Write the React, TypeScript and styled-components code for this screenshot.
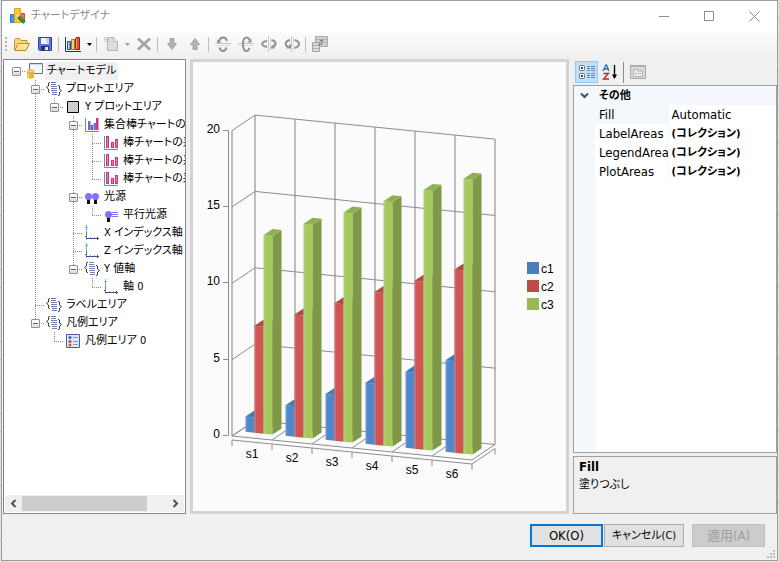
import React from "react";
import styled, { createGlobalStyle, css } from "styled-components";

const uiFont = `"DejaVu Sans Condensed", "Noto Sans", "Noto Sans CJK JP", sans-serif`;

const GlobalStyle = createGlobalStyle`
  *, *::before, *::after { box-sizing: border-box; }
  body {
    margin: 0;
    background: #e4e4e4;
    color: #000;
    font: 11px/18px ${uiFont};
    font-feature-settings: "palt";
  }
  button { font: inherit; font-feature-settings: inherit; color: inherit; }
  svg { display: block; }
`;

/* ---------- window frame ---------- */

const Desktop = styled.div`
  display: flex;
  min-height: 100vh;
  padding: 0 1px 1px;
  background: repeating-linear-gradient(#e4e4e4 0 17px, #c4c4c4 17px 18px);
`;

const Window = styled.main`
  flex: 1;
  min-width: 0;
  display: flex;
  flex-direction: column;
  border: 1px solid #9c9c9c;
  background: #f0f0f0;
`;

const TitleBar = styled.header`
  display: flex;
  align-items: center;
  height: 30px;
  padding-left: 8px;
  background: #fff;
`;

const Title = styled.h1`
  flex: 1;
  margin: 0 0 0 5px;
  font-size: 11px;
  font-weight: 400;
  color: #8c8c8c;
`;

const CaptionButton = styled.button`
  display: grid;
  place-items: center;
  width: 45px;
  height: 30px;
  padding: 0;
  border: 0;
  background: transparent;
`;

/* ---------- toolbar ---------- */

const ToolBar = styled.div`
  display: flex;
  align-items: center;
  height: 26px;
  padding-left: 3px;
  background: linear-gradient(#fcfcfc, #f0f0f0);
`;

const Grip = styled.span`
  width: 2px;
  height: 15px;
  margin-right: 3px;
  background: repeating-linear-gradient(#b4b4b4 0 2px, transparent 2px 4px);
`;

const ToolButton = styled.button<{ $narrow?: boolean }>`
  display: grid;
  place-items: center;
  width: ${(p) => (p.$narrow ? 10 : 23)}px;
  height: 22px;
  padding: 0;
  border: 0;
  background: transparent;
`;

const Separator = styled.span<{ $tall?: boolean }>`
  width: 1px;
  height: ${(p) => (p.$tall ? 21 : 15)}px;
  margin: 0 2px;
  background: ${(p) => (p.$tall ? "#8c8c8c" : "#bdbdbd")};
`;

/* ---------- body ---------- */

const Body = styled.div`
  flex: 1;
  min-height: 0;
  display: flex;
  gap: 4px;
  padding: 2px 0 0 1px;
`;

const TreePanel = styled.section`
  width: 183px;
  flex: none;
  display: flex;
  flex-direction: column;
  border: 1px solid #828790;
  background: #fff;
  overflow: hidden;
`;

const TreeList = styled.ul`
  flex: 1;
  margin: 0;
  padding: 2px 0 0 3px;
  list-style: none;
  overflow: hidden;
`;

const TreeRow = styled.li`
  display: flex;
  height: 18px;
  white-space: nowrap;
`;

const dots = "#8a8a8a";

const Guide = styled.span<{ $line: "none" | "full" | "upper"; $branch?: boolean }>`
  flex: none;
  display: grid;
  place-items: center;
  width: 19px;
  height: 18px;
  background-repeat: no-repeat;
  background-image: ${(p) =>
    p.$line === "none" ? "none" : `repeating-linear-gradient(${dots} 0 1px, transparent 1px 2px)`}
    ${(p) => p.$branch && css`, repeating-linear-gradient(90deg, ${dots} 0 1px, transparent 1px 2px)`};
  background-size: 1px ${(p) => (p.$line === "full" ? 18 : 10)}px, 10px 1px;
  background-position: 9px 0, 9px 9px;
`;

const Toggle = styled.button`
  display: grid;
  place-items: center;
  width: 9px;
  height: 9px;
  margin-top: 1px;
  padding: 0;
  border: 1px solid #919191;
  border-radius: 1px;
  background: linear-gradient(#fff, #dcdcdc);
  &::before {
    content: "";
    width: 5px;
    height: 1px;
    background: #4b63a7;
  }
`;

const NodeIcon = styled.span`
  flex: none;
  width: 17px;
  padding: 1px 0 0 1px;
`;

const NodeLabel = styled.span<{ $selected?: boolean }>`
  min-width: 0;
  height: 18px;
  margin-left: 2px;
  padding: 0 2px;
  overflow: hidden;
  line-height: 17px;
  background: ${(p) => (p.$selected ? "#f0f0f0" : "transparent")};
`;

const ScrollBar = styled.div`
  display: flex;
  height: 17px;
  margin: 0 1px 1px;
  background: #f0f0f0;
`;

const ScrollArrow = styled.button`
  display: grid;
  place-items: center;
  width: 17px;
  padding: 0;
  border: 0;
  background: transparent;
`;

const ScrollTrack = styled.div`
  flex: 1;
`;

const ScrollThumb = styled.div`
  width: 86%;
  height: 15px;
  margin-top: 1px;
  background: #cdcdcd;
`;

const ChartPanel = styled.section`
  flex: 1;
  min-width: 0;
  display: flex;
  border: 3px solid #d3d3d3;
  background: #fbfbfb;
`;

const ChartSvg = styled.svg`
  width: 100%;
  height: 100%;
  font-family: "Liberation Sans", Arial, sans-serif;
  font-size: 12px;
`;

const Side = styled.section`
  width: 204px;
  flex: none;
  display: flex;
  flex-direction: column;
`;

const SideTools = styled.div`
  display: flex;
  align-items: center;
  height: 26px;
  padding-left: 2px;
`;

const SideTool = styled(ToolButton)<{ $active?: boolean }>`
  border: 1px solid ${(p) => (p.$active ? "#90c8f6" : "transparent")};
  background: ${(p) => (p.$active ? "#c2dff5" : "transparent")};
`;

const GridBox = styled.div`
  flex: 1;
  border: 1px solid #a0a0a0;
  background: linear-gradient(90deg, #f4f7fc 21px, #fff 21px);
`;

const PropTable = styled.table`
  width: 100%;
  border-collapse: collapse;
  table-layout: fixed;
  td, th {
    height: 19px;
    padding: 0;
    line-height: 18px;
    text-align: left;
    white-space: nowrap;
    overflow: hidden;
  }
`;

const CategoryRow = styled.tr`
  background: #f4f7fc;
`;

const CategoryButton = styled.button`
  display: grid;
  place-items: center;
  width: 21px;
  height: 18px;
  padding: 0;
  border: 0;
  background: transparent;
`;

const PropName = styled.th<{ $selected?: boolean; $category?: boolean }>`
  &&& { padding-left: 4px; }
  font-size: ${(p) => (p.$category ? 11 : 13)}px;
  font-weight: ${(p) => (p.$category ? 700 : 400)};
  background: ${(p) => (p.$selected ? "#f4f7fc" : "transparent")};
  border-right: 1px solid #f4f7fc;
`;

const PropValue = styled.td<{ $bold?: boolean }>`
  &&& { padding-left: 3px; }
  font-size: ${(p) => (p.$bold ? 11 : 13)}px;
  font-weight: ${(p) => (p.$bold ? 700 : 400)};
`;

const Description = styled.div`
  height: 58px;
  margin-top: 3px;
  padding: 1px 5px;
  border: 1px solid #a0a0a0;
  h2, p { margin: 0; line-height: 18px; }
  h2 { font-size: 13px; }
  p { font-size: 11px; }
`;

const Footer = styled.footer`
  position: relative;
  display: flex;
  justify-content: flex-end;
  height: 46px;
  padding: 10px 12px 0 0;
`;

const DialogButton = styled.button<{ $primary?: boolean; $wide?: boolean; $apart?: boolean }>`
  width: ${(p) => (p.$wide ? 80 : 73)}px;
  height: 23px;
  margin-left: ${(p) => (p.$apart ? 8 : 1)}px;
  padding: 0;
  font-size: ${(p) => (p.$wide ? 11 : 13)}px;
  border: ${(p) => (p.$primary ? "2px solid #0078d7" : "1px solid #adadad")};
  background: #e1e1e1;
  white-space: nowrap;
  &:disabled { color: #9c9c9c; border-color: #bfbfbf; background: #ccc; }
`;

const ResizeGrip = styled.svg`
  position: absolute;
  right: 2px;
  bottom: 2px;
`;

/* ---------- icons ---------- */

const Pic = ({ children, size = 16 }: { children: React.ReactNode; size?: number }) => (
  <svg width={size} height={size} viewBox={`0 0 ${size} ${size}`} aria-hidden="true">
    {children}
  </svg>
);

const AppIcon = () => (
  <Pic>
    <path d="M.5 6.500h5v8h-5z" fill="#3f9be0" stroke="#3a78b4" />
    <path d="M10.500 5.500h4v8h-4z" fill="#ec7350" stroke="#c9532f" />
    <path d="M4.500.5h6v14h-6z" fill="#fbc440" stroke="#e2a021" />
    <path d="m8.500 8.500 6 6" stroke="#245c28" strokeWidth="3.500" />
    <path d="m8.500 8 6 6" stroke="#45a048" strokeWidth="1.800" />
    <path d="m6.500 6.500 3 1-2 2z" fill="#fff3d0" />
  </Pic>
);

const OpenIcon = () => (
  <Pic>
    <path d="M.5 14V3.500l1-1h4l1.500 2h6v3" fill="#f8d878" stroke="#c59332" />
    <path d="m1 14.500 3-7h11.500l-3.500 7z" fill="#fce38c" stroke="#bd8928" />
    <path d="M4 9h9" stroke="#fff3bd" />
  </Pic>
);

const SaveIcon = () => (
  <Pic>
    <path d="M1.500 1.500h13v13h-12l-1-1z" fill="#5e70db" stroke="#3540a4" />
    <path d="M4 2h8v6H4z" fill="#f3f6ff" />
    <path d="M9 2h3v5H9z" fill="#c5d2f5" />
    <path d="M4 10h8v4H4z" fill="#273178" />
    <path d="M8 11h3v3H8z" fill="#e8ecfa" />
  </Pic>
);

const BarsIcon = () => (
  <Pic>
    <path d="M.5 1v14.500H16" fill="none" stroke="#20365c" />
    <path d="M2.500 5.500h3v8h-3z" fill="#5b9bea" stroke="#244e98" />
    <path d="M6.500 3.500h3v10h-3z" fill="#fad658" stroke="#a07a20" />
    <path d="m10.500 2.500 1-1h3v12h-4z" fill="#e3492d" stroke="#8e2719" />
    <path d="M3.500 6v7" stroke="#b5dbff" />
    <path d="M11.500 3v10" stroke="#ffa083" />
  </Pic>
);

const Caret = ({ color }: { color: string }) => (
  <svg width="5" height="3" viewBox="0 0 5 3" aria-hidden="true">
    <path d="M0 0h5L2.500 3z" fill={color} />
  </svg>
);

const NewIcon = () => (
  <Pic>
    <path d="M4.500 1.500h6l4 4v9h-10z" fill="#dedede" stroke="#b4b4b4" />
    <path d="M10.500 1.500v4h4" fill="#f6f6f6" stroke="#b4b4b4" />
    <path d="M1 1.500h6M1 3.500h6M1 5.500h6" stroke="#bcbcbc" strokeDasharray="1 1" />
    <path d="M2 2.500h5M2 4.500h5" stroke="#c6c6c6" strokeDasharray="1 1" />
  </Pic>
);

const DeleteIcon = () => (
  <Pic>
    <path d="M2 2.500 14 13.500M14 2.500 2 13.500" stroke="#a3a3a3" strokeWidth="2.800" />
  </Pic>
);

const ArrowIcon = ({ up }: { up?: boolean }) => (
  <Pic>
    <path
      d="M6 2.500h4v5h2.500L8 13.500 3.500 7.500H6z"
      fill="#b3b3b3"
      stroke="#a3a3a3"
      transform={up ? "rotate(180 8 8)" : undefined}
    />
  </Pic>
);

const RotateIcon = ({ kind }: { kind: "xDown" | "xUp" | "yLeft" | "yRight" }) => {
  const vertical = kind === "yLeft" || kind === "yRight";
  return (
    <Pic>
      <path d={vertical ? "M7.500 0v16" : "M0 7.500h16"} stroke="#c6c6c6" />
      <path d={vertical ? "M9.500 1v13" : "M1 9.500h14"} stroke="#dcdcdc" />
      <g fill="none" stroke="#929292" strokeWidth="2">
        {kind === "xDown" && <path d="M4.500 5C5 .2 11 .2 12 5M4.500 11.500c1 4.500 6 4.500 7 0" />}
        {kind === "xUp" && <path d="M11.500 4C10-.2 5 .5 5 8s4 9.500 6.500 4" />}
        {kind === "yLeft" && <path d="M6 5C-.5 6-.5 9.500 6 11M10.500 4c5.500 1.500 5.500 5.500 0 7" />}
        {kind === "yRight" && <path d="M6 4C.5 5 .5 9.500 4.500 11M10.500 4c6 1.500 6 6.500 0 8" />}
      </g>
      {kind === "xDown" && <path d="M2 3v4h4.500z" fill="#929292" />}
      {kind === "xUp" && <path d="M13.500 2.500v4H9z" fill="#929292" />}
      {kind === "yLeft" && <path d="M13.500 7.500v5H9z" fill="#929292" />}
      {kind === "yRight" && <path d="M2 12.500h5v-5z" fill="#929292" />}
    </Pic>
  );
};

const SwapIcon = () => (
  <Pic>
    <path d="M3.500.5h12v10h-12z" fill="#d0d0d0" stroke="#a8a8a8" />
    <path d="M4 3.500h11M4 6.500h11" stroke="#b4b4b4" />
    <path d="M.5 6.500h7v9h-7z" fill="#dcdcdc" stroke="#a2a2a2" />
    <path d="M1 9.500h6M1 12.500h6" stroke="#b0b0b0" />
    <path d="M6 8.500h3.500V4M7.500 5.500l2-2 2 2" stroke="#7c7c7c" fill="none" />
  </Pic>
);

const ModelIcon = () => (
  <Pic>
    <path d="M2.500.5h13v10h-13z" fill="#f3f5fa" stroke="#65759a" />
    <path d="M3 1h12v1H3z" fill="#cfd9ee" />
    <path d="M0 8h7v6.500Q3.500 17 0 14.500z" fill="#efb233" />
    <path d="M1.500 9v5.500" stroke="#ffe49a" />
    <ellipse cx="3.500" cy="8.300" rx="3.400" ry="1.600" fill="#ffd772" stroke="#c98a1e" strokeWidth=".6" />
  </Pic>
);

const CollectionIcon = () => (
  <Pic>
    <path
      d="M4 1.500H3L2.500 2v3L.5 6.500l2 1.500v3l.5.500h1M12 4.500h1l.5.500v3l2 1.500-2 1.500v3l-.5.500h-1"
      fill="none"
      stroke="#3c3c3c"
    />
    <path d="M5 1.500h5M5 3.500h5M5 5.500h6M5 7.500h6M5 9.500h6M6 11.500h5M6 13.500h5" stroke="#6f85b8" />
  </Pic>
);

const HatchIcon = () => (
  <Pic>
    <path d="M2.500 2.500h11v11h-11z" fill="#dedede" stroke="#000" />
    <path
      d="m3 5 2-2M3 7l4-4M3 9l6-6M3 11l8-8M3 13 13 3M5 13l8-8M7 13l6-6M9 13l4-4M11 13l2-2"
      stroke="#b0aaa4"
      strokeWidth=".7"
    />
  </Pic>
);

const SeriesGroupIcon = () => (
  <Pic>
    <path d="M1.500 1v13.500H15" fill="none" stroke="#6a8aab" />
    <path d="M4 4h2.500v9H4z" fill="#5878dd" />
    <path d="M6.500 8H9v5H6.500z" fill="#cc3a78" />
    <path d="M9.500 6H12v7H9.500z" fill="#5878dd" />
    <path d="M12 1h2.500v12H12z" fill="#cc3a78" />
  </Pic>
);

const SeriesIcon = () => (
  <Pic>
    <path d="M1.500 1v13.500H15" fill="none" stroke="#6a8aab" />
    <path d="M3 1h3v12H3zM8 7h3v6H8zM12 4h3v9h-3z" fill="#cb3a72" />
    <path d="M4.500 2v10M9.500 8v4M13.500 5v7" stroke="#e27ba4" />
  </Pic>
);

const LightsIcon = () => (
  <Pic>
    <path d="M3 10h3v5H3zM10 10h3v5h-3z" fill="#111" />
    <circle cx="4.500" cy="7.500" r="3.500" fill="#8571ff" />
    <circle cx="11.500" cy="7.500" r="3.500" fill="#8571ff" />
    <path d="M5 6.500h6v2H5z" fill="#8571ff" />
  </Pic>
);

const LightIcon = () => (
  <Pic>
    <path d="M4 10h3v5H4z" fill="#111" />
    <circle cx="5.500" cy="7.500" r="3.500" fill="#8571ff" />
    <path d="M9 5.500h6M9 7.500h6M9 9.500h6" stroke="#8571ff" />
  </Pic>
);

const AxisIcon = () => (
  <Pic>
    <path d="M2.500 0v7M1 2.500h3" stroke="#75bdc4" />
    <path d="M2.500 7v7.500" stroke="#6d7ca8" />
    <path d="M2 13.500h13M13.500 12v3M1 11.500h1" stroke="#4b4b95" />
    <path d="M6.500 12v1M10.500 12v1" stroke="#a0a0c8" />
  </Pic>
);

const LegendIcon = () => (
  <Pic>
    <path d="M1.500 1.500h13v13h-13z" fill="#dfe8fb" stroke="#4c5c96" />
    <circle cx="5" cy="4.500" r="1.500" fill="#3558cf" />
    <circle cx="5" cy="8.500" r="1.500" fill="#db4632" />
    <circle cx="5" cy="12" r="1.500" fill="#c1652f" />
    <path d="M8 4.500h5M8 8.500h5M8 11.500h5" stroke="#7f97d4" />
  </Pic>
);

const CategorizedIcon = () => (
  <Pic>
    <rect x=".5" y="1.500" width="5" height="5" rx="1" fill="#fff" stroke="#77776f" />
    <rect x=".5" y="9.500" width="5" height="5" rx="1" fill="#fff" stroke="#77776f" />
    <path d="M2 4h2M3 3v2M2 12h2M3 11v2" stroke="#000" />
    <path d="M8 2.500h3M12 2.500h4M8 4.500h3M12 4.500h4M8 6.500h3M12 6.500h4M8 9.500h3M12 9.500h4M8 11.500h3M12 11.500h4M8 13.500h3M12 13.500h4" stroke="#5a86b5" />
  </Pic>
);

const SortIcon = () => (
  <Pic>
    <path d="M1 7 4 1h.5L7 7M2 5h4" fill="none" stroke="#2870bd" strokeWidth="1.300" />
    <path d="M1.500 9.500h5l-5 5.500h5.500" fill="none" stroke="#a32b39" strokeWidth="1.300" />
    <path d="M12.500 1v13" stroke="#000" strokeWidth="1.400" />
    <path d="M10 10.500h5l-2.500 4.500z" fill="#000" />
  </Pic>
);

const PagesIcon = () => (
  <Pic>
    <path d="M.5 1.500h15v13H.5z" fill="#d8d8d8" stroke="#a8a8a8" />
    <path d="M1 2.500h14" stroke="#b4b4b4" />
    <path d="M3.500 12.500v-7h4v1.500h5v5.500z" fill="#ececec" stroke="#b4b4b4" />
    <path d="M5 9.500h2M8 9.500h3" stroke="#b4b4b4" />
  </Pic>
);

const Chevron = ({ turn }: { turn: number }) => (
  <svg width="9" height="9" viewBox="0 0 9 9" aria-hidden="true">
    <path
      d="M1 2.500 4.500 6 8 2.500"
      fill="none"
      stroke="#505050"
      strokeWidth="2"
      transform={`rotate(${turn} 4.500 4.500)`}
    />
  </svg>
);

/* ---------- data ---------- */

type TreeNode = { label: string; icon: React.ReactNode; selected?: boolean; children?: TreeNode[] };

const tree: TreeNode = {
  label: "チャートモデル",
  icon: <ModelIcon />,
  selected: true,
  children: [
    {
      label: "プロットエリア",
      icon: <CollectionIcon />,
      children: [
        {
          label: "Y プロットエリア",
          icon: <HatchIcon />,
          children: [
            {
              label: "集合棒チャートの系列",
              icon: <SeriesGroupIcon />,
              children: [0, 1, 2].map((n) => ({ label: `棒チャートの系列 ${n}`, icon: <SeriesIcon /> })),
            },
            { label: "光源", icon: <LightsIcon />, children: [{ label: "平行光源", icon: <LightIcon /> }] },
            { label: "X インデックス軸", icon: <AxisIcon /> },
            { label: "Z インデックス軸", icon: <AxisIcon /> },
            { label: "Y 値軸", icon: <CollectionIcon />, children: [{ label: "軸 0", icon: <AxisIcon /> }] },
          ],
        },
      ],
    },
    { label: "ラベルエリア", icon: <CollectionIcon /> },
    {
      label: "凡例エリア",
      icon: <CollectionIcon />,
      children: [{ label: "凡例エリア 0", icon: <LegendIcon /> }],
    },
  ],
};

const TreeItems = ({ node, trail, last }: { node: TreeNode; trail: boolean[]; last: boolean }) => {
  const root = trail.length === 0;
  return (
    <>
      <TreeRow>
        {trail.map((open, i) => (
          <Guide key={i} $line={open ? "full" : "none"} />
        ))}
        <Guide $line={root ? "none" : last ? "upper" : "full"} $branch>
          {node.children && <Toggle aria-label={`${node.label} を折りたたむ`} />}
        </Guide>
        <NodeIcon>{node.icon}</NodeIcon>
        <NodeLabel $selected={node.selected}>{node.label}</NodeLabel>
      </TreeRow>
      {node.children?.map((child, i) => (
        <TreeItems
          key={i}
          node={child}
          trail={[...trail, !last]}
          last={i === node.children!.length - 1}
        />
      ))}
    </>
  );
};

const properties = [
  { name: "Fill", value: "Automatic", bold: false },
  { name: "LabelAreas", value: "(コレクション)", bold: true },
  { name: "LegendAreas", value: "(コレクション)", bold: true },
  { name: "PlotAreas", value: "(コレクション)", bold: true },
];

/* ---------- chart ---------- */

const UNIT = 15.27;
const STEP = 40;
const SLOPE = 0.1;
const DEPTH_X = 23;
const DEPTH_Y = -15.5;
const WIDTH = STEP * 6;

const series = [
  { name: "c1", offset: 0, front: "#5288ca", side: "#3f6da6", top: "#437ab8", key: "#4a7ebb" },
  { name: "c2", offset: 6, front: "#d05552", side: "#9d3c39", top: "#b34947", key: "#be4b48" },
  { name: "c3", offset: 12, front: "#a5c95f", side: "#7f9847", top: "#8fb151", key: "#98b954" },
];

const Bar = ({ x, value, s }: { x: number; value: number; s: (typeof series)[number] }) => {
  const base = x * SLOPE - 5.5;
  const top = base - value * UNIT;
  return (
    <>
      <path d={`M${x} ${base}V${top}l9 .9V${base + 0.9}z`} fill={s.front} />
      <path d={`M${x + 9} ${base + 0.9}V${top + 0.9}l9-6.100V${base - 5.2}z`} fill={s.side} />
      <path d={`M${x} ${top}l9-6.100 9 .9-9 6.100z`} fill={s.top} />
      <path d={`M${x + 0.5} ${base}V${top + 0.5}`} stroke="#fff" strokeOpacity=".25" />
    </>
  );
};

const columns = [0, 1, 2, 3, 4, 5, 6];
const levels = [0, 5, 10, 15, 20];

const Chart = () => (
  <ChartSvg viewBox="0 0 373 449" role="img" aria-label="3D 集合棒チャート">
    <g transform="translate(39 374)" fill="none" stroke="#8c8c8c">
      {columns.map((c) => {
        const x = c * STEP + DEPTH_X;
        const y = c * STEP * SLOPE + DEPTH_Y;
        return (
          <path
            key={c}
            d={`M${x} ${y}V${y - 20 * UNIT}`}
            stroke={c < 3 ? "#bdbdbd" : "#a4a4a4"}
            strokeWidth={c < 3 ? 2 : 1.400}
          />
        );
      })}
      <path d={`M0 0V${-20 * UNIT}`} stroke="#bdbdbd" strokeWidth="2" />
      {levels.map((v) => (
        <path key={v} d={`M0 ${-v * UNIT}l${DEPTH_X} ${DEPTH_Y} ${WIDTH} ${WIDTH * SLOPE}`} />
      ))}
      {columns.map((c) => (
        <path key={c} d={`M${c * STEP} ${c * STEP * SLOPE}l${DEPTH_X} ${DEPTH_Y}`} />
      ))}
      <path d={`M0 0l${WIDTH} ${WIDTH * SLOPE}`} />
      <path d={`M0 4l${WIDTH} ${WIDTH * SLOPE} ${DEPTH_X} ${DEPTH_Y}v6`} />
      {columns.map((c) => (
        <path key={c} d={`M${c * STEP} ${c * STEP * SLOPE + 4}v6`} />
      ))}
      <path d={`M-3.500 -1V${-20 * UNIT}`} />
      {levels.map((v) => (
        <path key={v} d={`M-9 ${Math.round(-v * UNIT) - 0.5}h5.500`} />
      ))}
      <g stroke="none">
        {[0, 1, 2, 3, 4, 5].map((c) =>
          series.map((s, i) => (
            <Bar key={`${c}${s.name}`} x={c * STEP + 13.5 + i * 9} value={c + 1 + s.offset} s={s} />
          )),
        )}
      </g>
      <g fill="#000" stroke="none">
        {levels.map((v) => (
          <text key={v} x="-12" y={2 - v * UNIT} textAnchor="end">
            {v}
          </text>
        ))}
        {[0, 1, 2, 3, 4, 5].map((c) => (
          <text key={c} x={c * STEP + 20} y={c * 4 + 22} textAnchor="middle">
            {`s${c + 1}`}
          </text>
        ))}
      </g>
    </g>
    {series.map((s, i) => (
      <g key={s.name}>
        <rect x="334" y={200 + i * 18} width="12" height="12" fill={s.key} />
        <text x="348" y={211 + i * 18}>
          {s.name}
        </text>
      </g>
    ))}
  </ChartSvg>
);

/* ---------- page ---------- */

export default function App() {
  return (
    <Desktop>
      <GlobalStyle />
      <Window>
        <TitleBar>
          <AppIcon />
          <Title>チャートデザイナ</Title>
          <CaptionButton aria-label="最小化">
            <Pic size={11}><path d="M0 5.500h10" stroke="#8c8c8c" /></Pic>
          </CaptionButton>
          <CaptionButton aria-label="最大化">
            <Pic size={11}><path d="M.5.5h9v9h-9z" fill="none" stroke="#8c8c8c" /></Pic>
          </CaptionButton>
          <CaptionButton aria-label="閉じる">
            <Pic size={11}><path d="m.5.5 10 10m0-10-10 10" stroke="#8c8c8c" /></Pic>
          </CaptionButton>
        </TitleBar>

        <ToolBar role="toolbar" aria-label="チャート">
          <Grip />
          <ToolButton aria-label="開く"><OpenIcon /></ToolButton>
          <ToolButton aria-label="保存"><SaveIcon /></ToolButton>
          <Separator />
          <ToolButton aria-label="チャートの種類"><BarsIcon /></ToolButton>
          <ToolButton $narrow aria-label="種類の一覧"><Caret color="#000" /></ToolButton>
          <Separator />
          <ToolButton disabled aria-label="追加"><NewIcon /></ToolButton>
          <ToolButton disabled $narrow aria-label="追加の一覧"><Caret color="#999" /></ToolButton>
          <ToolButton disabled aria-label="削除"><DeleteIcon /></ToolButton>
          <Separator />
          <ToolButton disabled aria-label="下へ"><ArrowIcon /></ToolButton>
          <ToolButton disabled aria-label="上へ"><ArrowIcon up /></ToolButton>
          <Separator />
          <ToolButton disabled aria-label="下に回転"><RotateIcon kind="xDown" /></ToolButton>
          <ToolButton disabled aria-label="上に回転"><RotateIcon kind="xUp" /></ToolButton>
          <ToolButton disabled aria-label="左に回転"><RotateIcon kind="yLeft" /></ToolButton>
          <ToolButton disabled aria-label="右に回転"><RotateIcon kind="yRight" /></ToolButton>
          <Separator />
          <ToolButton disabled aria-label="行と列の入れ替え"><SwapIcon /></ToolButton>
        </ToolBar>

        <Body>
          <TreePanel>
            <TreeList>
              <TreeItems node={tree} trail={[]} last />
            </TreeList>
            <ScrollBar>
              <ScrollArrow aria-label="左へスクロール"><Chevron turn={90} /></ScrollArrow>
              <ScrollTrack><ScrollThumb /></ScrollTrack>
              <ScrollArrow aria-label="右へスクロール"><Chevron turn={-90} /></ScrollArrow>
            </ScrollBar>
          </TreePanel>

          <ChartPanel><Chart /></ChartPanel>

          <Side>
            <SideTools>
              <SideTool $active aria-label="項目別"><CategorizedIcon /></SideTool>
              <SideTool aria-label="アルファベット順"><SortIcon /></SideTool>
              <Separator $tall />
              <SideTool disabled aria-label="プロパティ ページ"><PagesIcon /></SideTool>
            </SideTools>
            <GridBox>
              <PropTable>
                <colgroup>
                  <col style={{ width: 21 }} />
                  <col style={{ width: 73 }} />
                  <col />
                </colgroup>
                <tbody>
                  <CategoryRow>
                    <td>
                      <CategoryButton aria-label="その他を折りたたむ"><Chevron turn={0} /></CategoryButton>
                    </td>
                    <PropName $category colSpan={2}>その他</PropName>
                  </CategoryRow>
                  {properties.map((p, i) => (
                    <tr key={p.name}>
                      <td />
                      <PropName scope="row" $selected={i === 0}>{p.name}</PropName>
                      <PropValue $bold={p.bold}>{p.value}</PropValue>
                    </tr>
                  ))}
                </tbody>
              </PropTable>
            </GridBox>
            <Description>
              <h2>Fill</h2>
              <p>塗りつぶし</p>
            </Description>
          </Side>
        </Body>

        <Footer>
          <DialogButton $primary>OK(O)</DialogButton>
          <DialogButton $wide>キャンセル(C)</DialogButton>
          <DialogButton $apart disabled>適用(A)</DialogButton>
          <ResizeGrip width="8" height="8" viewBox="0 0 8 8" aria-hidden="true">
            <path d="M6 0h2v2H6zM3 3h2v2H3zM6 3h2v2H6zM0 6h2v2H0zM3 6h2v2H3zM6 6h2v2H6z" fill="#bdbdbd" />
          </ResizeGrip>
        </Footer>
      </Window>
    </Desktop>
  );
}
